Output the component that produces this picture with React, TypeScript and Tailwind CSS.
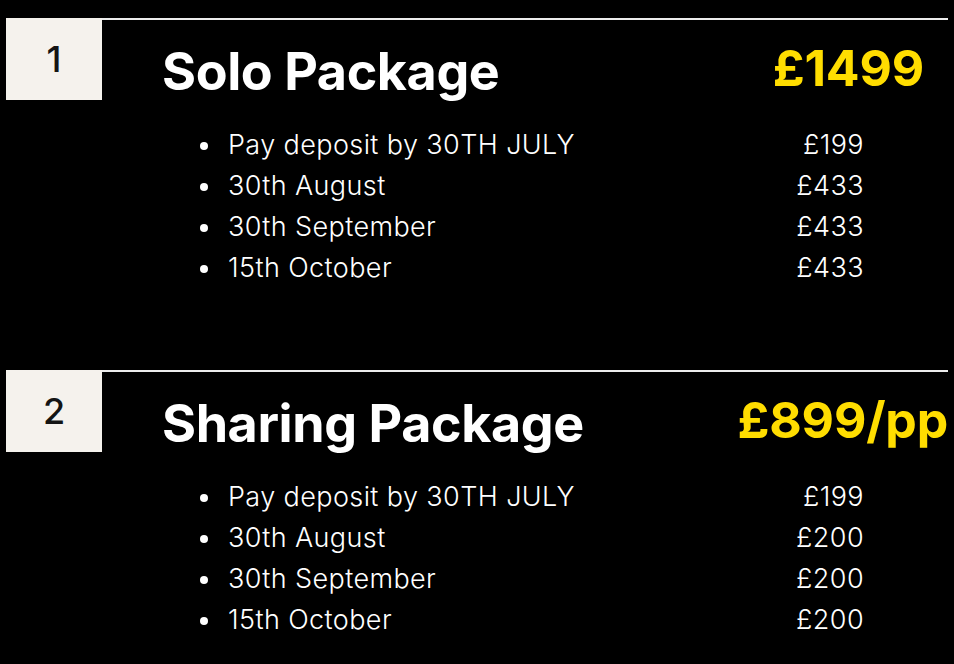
import React from 'react';

interface Installment {
  label: string;
  amount: string;
}

interface PackageProps {
  index: number;
  title: string;
  price: string;
  priceGap: string;
  items: Installment[];
}

const font = { fontFamily: 'Inter, "Noto Sans", sans-serif' };

const PackageBlock: React.FC<PackageProps> = ({ index, title, price, priceGap, items }) => (
  <section className="flex">
    <div className="ml-[6px] w-[96px] h-[82px] shrink-0 bg-[#f5f2ed] flex items-center justify-center text-[36px] text-[#141414] font-medium">
      {index}
    </div>
    <div className="flex-1 mr-[6px] border-t-2 border-[#ececec]">
      <div className="flex items-start justify-between pl-[60px]">
        <h2 className="mt-[24px] text-[52px] leading-[56px] font-bold tracking-[-0.4px] text-white">{title}</h2>
        <span className={`mt-[20px] text-[50px] leading-[56px] font-bold tracking-[-0.2px] text-[#ffdd00] ${priceGap}`}>{price}</span>
      </div>
      <ul className="mt-[25px] pl-[98px] pr-[84px]">
        {items.map((item, i) => (
          <li key={i} className="flex items-center h-[41px] text-[27px] tracking-[0.4px] text-white font-light">
            <span className="w-[8px] h-[8px] rounded-full bg-white mr-[20px]" />
            <span className="flex-1">{item.label}</span>
            <span className="text-right">{item.amount}</span>
          </li>
        ))}
      </ul>
    </div>
  </section>
);

const packages: PackageProps[] = [
  {
    index: 1,
    title: 'Solo Package',
    price: '£1499',
    priceGap: 'mr-[24px]',
    items: [
      { label: 'Pay deposit by 30TH JULY', amount: '£199' },
      { label: '30th August', amount: '£433' },
      { label: '30th September', amount: '£433' },
      { label: '15th October', amount: '£433' },
    ],
  },
  {
    index: 2,
    title: 'Sharing Package',
    price: '£899/pp',
    priceGap: 'mr-[0px]',
    items: [
      { label: 'Pay deposit by 30TH JULY', amount: '£199' },
      { label: '30th August', amount: '£200' },
      { label: '30th September', amount: '£200' },
      { label: '15th October', amount: '£200' },
    ],
  },
];

export default function App() {
  return (
    <div className="w-[954px] h-[664px] bg-black overflow-hidden pt-[18px] flex flex-col" style={font}>
      <div className="h-[352px]">
        <PackageBlock {...packages[0]} />
      </div>
      <PackageBlock {...packages[1]} />
    </div>
  );
}
